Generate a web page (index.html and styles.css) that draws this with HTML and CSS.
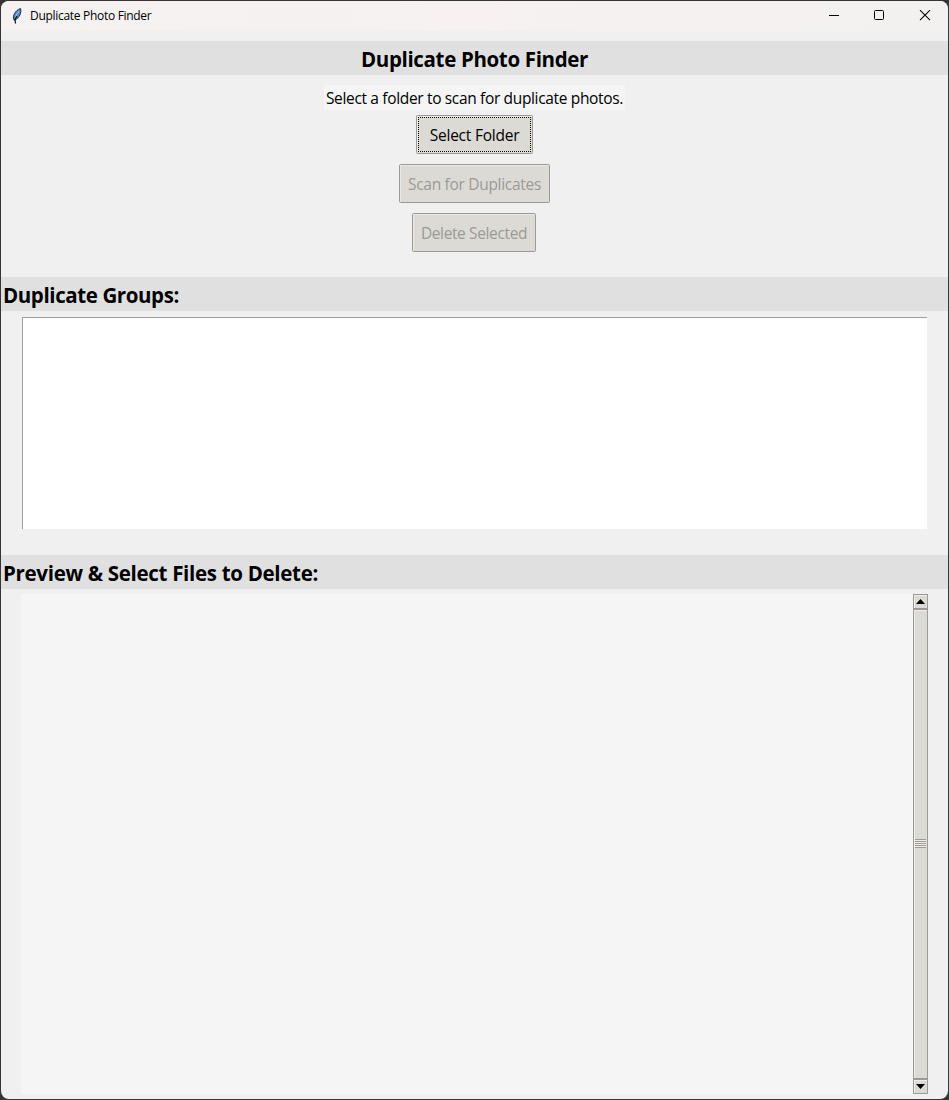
FILE: index.html
```html
<!DOCTYPE html>
<html lang="en">
<head>
<meta charset="utf-8">
<title>Duplicate Photo Finder</title>
<link rel="stylesheet" href="styles.css">
</head>
<body>
<div class="window">
  <header class="titlebar">
    <svg class="feather" width="12" height="18" viewBox="0 0 12 18">
      <path d="M3 13C1.200 9 4 3.500 9.500 1.500C10.800 5 8.500 11 4 13Z" fill="#4f86c4" stroke="#1d2c44" stroke-width="1"/>
      <path d="M4.500 16.500L4 12.500L6 9" fill="none" stroke="#101216" stroke-width="1.200"/>
      <path d="M4.500 9.500L8 4" stroke="#a7cdf0" stroke-width="1"/>
    </svg>
    <span class="caption">Duplicate Photo Finder</span>
    <div class="controls">
      <svg width="12" height="12" viewBox="0 0 12 12"><path d="M1 5.500H11" stroke="#000"/></svg>
      <svg width="12" height="12" viewBox="0 0 12 12"><rect x="1.500" y="0.500" width="9" height="9" rx="1" fill="none" stroke="#000"/></svg>
      <svg width="12" height="12" viewBox="0 0 12 12"><path d="M1 0.200L11 10.200M11 0.200L1 10.200" stroke="#000" stroke-width="1.100"/></svg>
    </div>
  </header>
  <h1 class="band band-title"><span class="t-title">Duplicate Photo Finder</span></h1>
  <section class="actions">
    <p class="status"><span class="t-status">Select a folder to scan for duplicate photos.</span></p>
    <button class="btn btn-select"><span class="t-select">Select Folder</span></button>
    <button class="btn btn-scan" disabled><span class="t-scan">Scan for Duplicates</span></button>
    <button class="btn btn-delete" disabled><span class="t-delete">Delete Selected</span></button>
  </section>
  <h2 class="band"><span class="t-groups">Duplicate Groups:</span></h2>
  <div class="listbox"></div>
  <h2 class="band"><span class="t-preview">Preview &amp; Select Files to Delete:</span></h2>
  <div class="preview">
    <div class="canvas"></div>
    <div class="scrollbar">
      <div class="arrow"><svg width="9" height="5" viewBox="0 0 9 5"><path d="M0 5L4.500 0L9 5Z"/></svg></div>
      <div class="thumb"><div class="grip"></div></div>
      <div class="arrow"><svg width="9" height="5" viewBox="0 0 9 5"><path d="M0 0L4.500 5L9 0Z"/></svg></div>
    </div>
  </div>
</div>
</body>
</html>
```
FILE: styles.css
```css
* { box-sizing: border-box; }
body {
  margin: 0;
  height: 1100px;
  padding: 1px;
  background: #363435;
  font-family: "Open Sans", "Noto Sans", sans-serif;
  color: #000;
  overflow: hidden;
}
.window {
  width: 947px;
  height: 1098px;
  border-radius: 8px;
  background: #f0f0f0;
  overflow: hidden;
  display: flex;
  flex-direction: column;
}
.titlebar {
  height: 30px;
  flex: none;
  display: flex;
  align-items: center;
  padding-left: 10px;
  background: linear-gradient(90deg, #f5f2f1, #f7f1f1 50%, #f3f1f0);
}
.feather { margin-top: -1px; }
.caption { margin-left: 7px; font-size: 12px; letter-spacing: -0.3px; line-height: 16px; }
.controls { margin-left: auto; display: flex; gap: 33px; padding-right: 17px; }
.controls svg { display: block; }
.controls svg:last-child { margin-left: 1px; }
.band {
  flex: none;
  height: 34px;
  margin: 0;
  padding: 1px 2px 0;
  background: #e0e0e0;
  font-size: 20.5px;
  font-weight: 700;
  line-height: 34px;
  white-space: nowrap;
}
.band-title { margin-top: 10px; text-align: center; }
.t-title { letter-spacing: -0.35px; }
.t-groups { letter-spacing: -0.4px; }
.t-preview { letter-spacing: -0.31px; }
.actions {
  flex: none;
  height: 202px;
  padding-top: 10px;
  display: flex;
  flex-direction: column;
  align-items: center;
  white-space: nowrap;
}
.status {
  margin: 0 0 5px;
  width: 301px;
  height: 25px;
  font-size: 15.5px;
  line-height: 27px;
  background: #f5f5f5;
  display: flex;
  justify-content: center;
}
.t-status { letter-spacing: -0.34px; }
.btn {
  height: 39px;
  margin: 0 0 10px;
  padding: 1px 0 0;
  border: 1px solid #9c9a93;
  border-radius: 1.500px;
  background: #dcdad5;
  box-shadow: inset 1px 1px #e9e8e4;
  font: 15.5px "Open Sans", "Noto Sans", sans-serif;
  color: #000;
  display: flex;
  align-items: center;
  justify-content: center;
}
.btn:disabled { color: #9b9a96; }
.btn-select { width: 117px; outline: 1px dotted #000; outline-offset: -3px; }
.btn-scan { width: 151px; }
.btn-delete { width: 124px; margin-right: 1px; }
.t-select { letter-spacing: -0.23px; }
.t-scan { letter-spacing: -0.3px; }
.t-delete { letter-spacing: -0.37px; }
.listbox {
  flex: none;
  height: 212px;
  margin: 6px 21px 26px;
  background: #fff;
  border: solid #a0a0a0;
  border-width: 1px 0 0 1px;
}
.preview { height: 500px; margin: 5px 20px 0; display: flex; }
.canvas { flex: 1; background: #f5f5f5; }
.scrollbar { width: 15px; display: flex; flex-direction: column; border: 1px solid #9e9a91; background: #dcdad5; }
.arrow { flex: none; height: 13px; display: flex; align-items: center; justify-content: center; box-shadow: inset 1px 1px #efeeeb; }
.arrow svg { display: block; }
.thumb {
  flex: 1;
  border: solid #9e9a91;
  border-width: 2px 0;
  display: flex;
  align-items: center;
  justify-content: center;
  padding-bottom: 2px;
  box-shadow: inset 1px 1px #efeeeb;
}
.grip { width: 11px; height: 9px; background: repeating-linear-gradient(#9e9a91 0 1px, #efeeeb 1px 2px); }
```
